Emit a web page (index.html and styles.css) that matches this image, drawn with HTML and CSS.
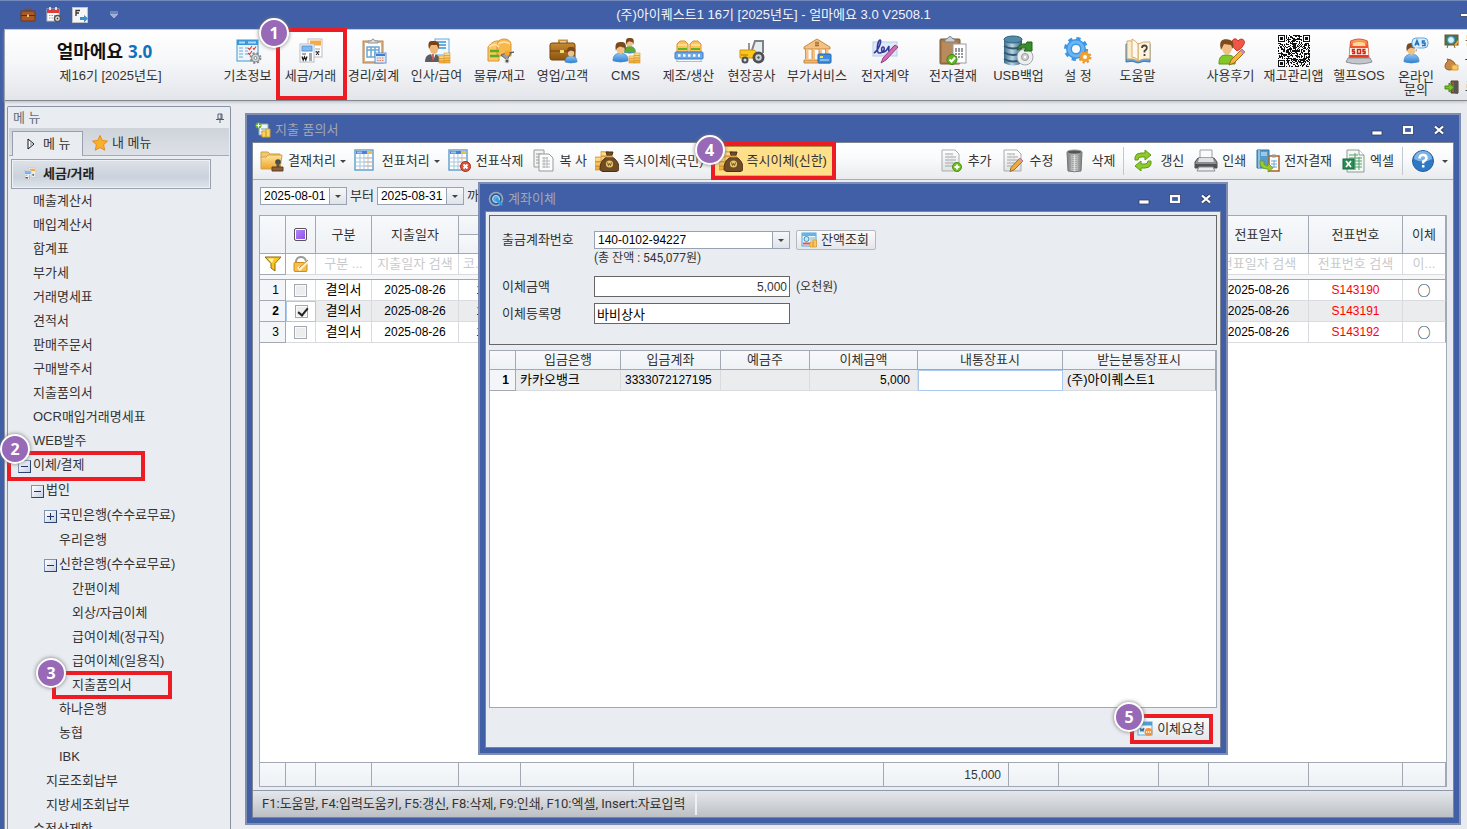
FILE: index.html
```html
<!DOCTYPE html>
<html lang="ko">
<head>
<meta charset="utf-8">
<title>얼마에요 3.0</title>
<link rel="stylesheet" href="styles.css">
</head>
<body>
<svg class="sprite" aria-hidden="true">
  <defs>
    <linearGradient id="gBlue" x1="0" y1="0" x2="0" y2="1"><stop offset="0" stop-color="#8cc6f4"/><stop offset="1" stop-color="#2f7fd0"/></linearGradient>
    <linearGradient id="gGold" x1="0" y1="0" x2="0" y2="1"><stop offset="0" stop-color="#ffe39a"/><stop offset="1" stop-color="#eda52c"/></linearGradient>
    <linearGradient id="gPage" x1="0" y1="0" x2="0" y2="1"><stop offset="0" stop-color="#ffffff"/><stop offset="1" stop-color="#dfe2e4"/></linearGradient>
    <linearGradient id="gBrown" x1="0" y1="0" x2="0" y2="1"><stop offset="0" stop-color="#c58a33"/><stop offset="1" stop-color="#8a540f"/></linearGradient>
    <linearGradient id="gGray" x1="0" y1="0" x2="1" y2="0"><stop offset="0" stop-color="#777"/><stop offset=".5" stop-color="#ddd"/><stop offset="1" stop-color="#777"/></linearGradient>
    <linearGradient id="gDb" x1="0" y1="0" x2="1" y2="0"><stop offset="0" stop-color="#3c6a88"/><stop offset=".45" stop-color="#b9d6e4"/><stop offset="1" stop-color="#2f5974"/></linearGradient>
    <linearGradient id="gRed" x1="0" y1="0" x2="0" y2="1"><stop offset="0" stop-color="#ffb25c"/><stop offset=".35" stop-color="#f4572f"/><stop offset="1" stop-color="#e2341f"/></linearGradient>
    <g id="coins"><rect x="0" y="4" width="6" height="7" fill="url(#gGold)" stroke="#d9982e" stroke-width=".6"/><rect x="5" y="1" width="6" height="10" fill="url(#gGold)" stroke="#d9982e" stroke-width=".6"/><path d="M0 6.500h5M0 9h5M5 3.500h6M5 6h6M5 8.500h6" stroke="#d9982e" stroke-width=".8"/></g>
    <g id="man"><path d="M0 15c0-4 2-6 6-6s6 2 6 6q-6 2-12 0z" fill="url(#gBlue)" stroke="#3d86cc" stroke-width=".6"/><ellipse cx="6" cy="5.500" rx="3.300" ry="4" fill="#f2c189"/><path d="M2.300 7C1 0 4 0 6.500 0s5 1 3.300 7L9 4.500 5.500 3.500 3.200 5z" fill="#7a4a1c"/></g>
    <g id="bag"><path d="M9 2h7l-1.500 4.500C20 10 22 13 22 19.500q-1 2-3 2H6q-2 0-3-2C3 13 5 10 10.500 6.500z" fill="#6f4b26" stroke="#4b2f14"/><path d="M9 6.500h7" stroke="#d8a758" stroke-width="1.600"/><circle cx="12.500" cy="14" r="3.600" fill="#e3c56b"/><path d="M10.500 12.500l1 3 1-2 1 2 1-3" fill="none" stroke="#6b4516" stroke-width=".9"/></g>
    <g id="sheet"><path d="M2 1h13l4 4v17H2z" fill="url(#gPage)" stroke="#a9abad"/><path d="M5 5h8M5 8h11M5 11h11M5 14h11M5 17h11" stroke="#a1a4a7"/><path d="M8 4v14M12 4v14" stroke="#c8cacc" stroke-width=".7"/></g>
    <g id="gridsheet"><rect x="1" y="1" width="18" height="20" fill="#fff" stroke="#5d9dca" stroke-width="1.400"/><rect x="2" y="2" width="16" height="3" fill="#4f7fd6"/><path d="M3 3.500h5" stroke="#9fc2f2" stroke-width="2"/><path d="M13 3.500h5" stroke="#f5bd3c" stroke-width="3"/><path d="M2 9h16M2 13h16M2 17h16M6 5v15M10 5v15M14 5v15" stroke="#a5c5df"/><path d="M11 9h7M11 13h7M11 17h7" stroke="#f0b58d"/></g>
  </defs>
  <symbol id="i-basic" viewBox="0 0 32 32"><rect x="5" y="5" width="21" height="21" fill="#eef6fd" stroke="#3c9ad2"/><path d="M5 5h21v5H5z" fill="#3b98d6"/><path d="M7 7.500h6M16 7.500h8" stroke="#a8dcfa" stroke-width="2"/><path d="M7 13h4M7 16h4M7 19h4M7 22h4M13 13h3M13 16h3M13 19h3" stroke="#9cc2df" stroke-width="1.500"/><path d="M16 13l1.500 1.500L20 11M21 13l1 1.500 2-3M16 18l1.500 1.500L20 16" fill="none" stroke="#d9453a" stroke-width="1.200"/><circle cx="23.500" cy="23" r="4" fill="#d5d8da" stroke="#85898c"/><circle cx="23.500" cy="23" r="5" fill="none" stroke="#85898c" stroke-width="1.800" stroke-dasharray="2 2"/><circle cx="23.500" cy="23" r="1.500" fill="#fff" stroke="#85898c"/></symbol>
  <symbol id="i-tax" viewBox="0 0 32 32"><rect x="13" y="4" width="14" height="18" fill="#fff" stroke="#b9bcc0"/><rect x="15" y="5.500" width="11" height="5" fill="#f7a94a"/><path d="M20 14h5M20 17h5" stroke="#9fa2a5"/><path d="M21 16l3 4m0-4l-3 4" stroke="#333" stroke-width="1.200"/><rect x="5" y="9" width="14" height="18" fill="#fff" stroke="#b9bcc0"/><rect x="7" y="11" width="10" height="5" fill="#7fb9ee" stroke="#5597d8"/><path d="M7 19h4M14 19h3M14 21h3M14 23h3M14 25h3" stroke="#8b8f92" stroke-width="1.300"/><path d="M7 21.500l1.200 3.500 1.300-3 1.300 3 1.200-3.500" fill="none" stroke="#222" stroke-width="1.300"/></symbol>
  <symbol id="i-acct" viewBox="0 0 32 32"><rect x="5" y="6" width="20" height="22" fill="#d9b48c" stroke="#b28755"/><rect x="7" y="8" width="16" height="18" fill="#fff"/><path d="M10 8V6h3q2-4 4 0h3v2z" fill="#dadde0" stroke="#8e9397"/><path d="M9 12h12v10H9zM9 15h12M13 12v10M17 12v10" fill="none" stroke="#6aa7d5" stroke-width="1.500"/><rect x="17" y="18" width="11" height="10" fill="#dcebfb" stroke="#6c92c6"/><path d="M18 20h9" stroke="#3b7fd0" stroke-width="2"/><path d="M19 23h7M19 25.500h7" stroke="#e07b5b" stroke-dasharray="1.500 1"/></symbol>
  <symbol id="i-hr" viewBox="0 0 32 32"><rect x="14" y="4" width="14" height="16" fill="#f2f9ff" stroke="#67a9d9"/><path d="M16 7h9M16 10h9M16 13h9" stroke="#3d94d4" stroke-width="1.600"/><path d="M4 27c0-6 3-8 8-8s7 3 7 8z" fill="#5a5d63"/><path d="M10 18l2 8 3-8z" fill="#fff"/><path d="M12 19v7" stroke="#b83a2d" stroke-width="1.500"/><ellipse cx="13" cy="13" rx="4.500" ry="6" fill="#efb878"/><path d="M8 14C6 5 10 6 13 6s7 1 4.500 8L16 10l-6 0z" fill="#7a4311"/><use href="#coins" x="18" y="17"/></symbol>
  <symbol id="i-stock" viewBox="0 0 32 32"><path d="M4 12q5-7 11-6v20H4z" fill="#fbc765" stroke="#dc9430"/><path d="M13 10q1-6 7-6 6 0 7 5v12H13z" fill="#f8b84c" stroke="#dc9430"/><path d="M5 12q6-5 10 0M14 9q6-4 12 0" fill="none" stroke="#ffe8b0" stroke-width="1.500"/><path d="M6 16h9M6 21h9" stroke="#5dab23" stroke-width="2.500"/><path d="M30 17l-3 1-4 7-6-5 5-2z" fill="#9a9da1" stroke="#5c5f63"/><circle cx="23" cy="26" r="2" fill="#555" stroke="#ccc"/><circle cx="23" cy="18" r="2.500" fill="#f5a72c"/></symbol>
  <symbol id="i-sales" viewBox="0 0 32 32"><path d="M12 9V5.500h8V9" fill="none" stroke="#c99533" stroke-width="2"/><rect x="3" y="8" width="25" height="17" rx="2" fill="url(#gBrown)" stroke="#774607"/><path d="M3 16h25" stroke="#70400a"/><rect x="13" y="15" width="4" height="3" fill="#f4d77a"/><use href="#man" transform="translate(18 12) scale(1)"/></symbol>
  <symbol id="i-cms" viewBox="0 0 32 32"><g transform="translate(14 3) scale(.95)"><use href="#man"/><path d="M0 15c0-4 2-6 6-6s6 2 6 6z" fill="#5faa2e"/></g><use href="#man" transform="translate(3 7) scale(1.250)"/><use href="#coins" x="19" y="17"/></symbol>
  <symbol id="i-prod" viewBox="0 0 32 32"><path d="M4 9l3-3h5l3 3v8H4zM17 9l3-3h5l3 3v8H17z" fill="#fbc55c" stroke="#dc9430"/><path d="M5 10h9M18 10h9" stroke="#ffe3a3" stroke-width="1.500"/><path d="M5 14h9M18 14h9" stroke="#63b02c" stroke-width="2"/><rect x="2" y="17" width="28" height="7" rx="1" fill="#6ba8e8" stroke="#3d7dc5"/><path d="M5 20.500h22" stroke="#fff" stroke-width="2.500" stroke-dasharray="2.500 2.500"/><path d="M4 24v3M28 24v3M3 26.500h26" stroke="#9cc2e8"/></symbol>
  <symbol id="i-site" viewBox="0 0 32 32"><path d="M16 15l3-9h8v12" fill="#e6edf1" stroke="#7d8286" stroke-width="2"/><path d="M13 8v7" stroke="#72767a" stroke-width="1.500"/><path d="M4 15h14l4 3 5 1v4H4z" fill="#fcc518" stroke="#cf940d"/><path d="M5 20h7" stroke="#a47607"/><circle cx="9" cy="25" r="3.500" fill="#4d4f52"/><circle cx="9" cy="25" r="1.500" fill="#ddd"/><circle cx="22.500" cy="22.500" r="6" fill="#4d4f52"/><circle cx="22.500" cy="22.500" r="3.200" fill="#cfd2d4"/><circle cx="22.500" cy="22.500" r="1.200" fill="#555"/></symbol>
  <symbol id="i-extra" viewBox="0 0 32 32"><path d="M3 12L16 4l13 8v2H3z" fill="#f3c283" stroke="#c88a3f"/><path d="M14 8h4M14 10.500h4M15 6.500v5M17 6.500v5" stroke="#9a5a18" stroke-width=".8"/><path d="M6 14v10M12.500 14v10M19.500 14v10M26 14v10" stroke="#f4c282" stroke-width="3"/><path d="M4.500 14v10M11 14v10M18 14v10M24.500 14v10" stroke="#bd7b30" stroke-width=".7"/><path d="M3 25h26v3H3z" fill="#efb76e" stroke="#c88a3f"/><rect x="17" y="19" width="13" height="9" rx="1" fill="#3c8fe0" stroke="#2367b0"/><path d="M19 25h9" stroke="#cce6ff"/><rect x="19" y="21" width="3" height="2" fill="#ffdc5a"/></symbol>
  <symbol id="i-sign" viewBox="0 0 32 32"><rect x="4" y="7" width="24" height="14" fill="#ddebf8" stroke="#b5cde4"/><path d="M5 18c5-3 8-13 6-13s-5 14 0 13 5-6 3-6-2 6 1 5 4-4 5-6c0 4-1 6 1 5s3-5 5-5" fill="none" stroke="#3a3c9c" stroke-width="1.600"/><path d="M26 10l3 2-12 13-5 3 2-5z" fill="#d46bb5" stroke="#993f82"/></symbol>
  <symbol id="i-appr" viewBox="0 0 32 32"><rect x="3" y="4" width="20" height="25" rx="1" fill="#a8794c" stroke="#7f5730"/><rect x="5" y="7" width="15" height="20" fill="#b88a5c"/><path d="M8 7V4h2q3-5 6 0h2v3z" fill="#c9ced1" stroke="#7b8084"/><rect x="16" y="9" width="13" height="19" fill="#fff" stroke="#999c9f"/><path d="M18 14h9M18 16h9M18 19h9M18 22h9" stroke="#74787b" stroke-width="1.500" stroke-dasharray="2 1"/><circle cx="15" cy="24.500" r="5" fill="#62b727" stroke="#3e8811"/><path d="M12.500 24.500l2 2 3.500-4" fill="none" stroke="#fff" stroke-width="2"/></symbol>
  <symbol id="i-usb" viewBox="0 0 32 32"><path d="M1 4v24q9 5 18 0V4z" fill="url(#gDb)"/><ellipse cx="10" cy="4.500" rx="9" ry="3.500" fill="#528ba9" stroke="#2f5f7b"/><path d="M1 11q9 5 18 0M1 17.500q9 5 18 0M1 24q9 5 18 0" fill="none" stroke="#305a73" stroke-width="2"/><circle cx="22" cy="22" r="8" fill="#eceeef" stroke="#a4a8ab"/><circle cx="22" cy="22" r="3.500" fill="#cdd2d5" stroke="#999"/><circle cx="22" cy="22" r="1.200" fill="#fff"/><path d="M14 15q2-7 9-6l1-2h5v9h-8l2-3q-5-1-9 2z" fill="#388d2c" stroke="#216517"/></symbol>
  <symbol id="i-set" viewBox="0 0 32 32"><circle cx="14" cy="14" r="7" fill="none" stroke="#3b97e6" stroke-width="6"/><circle cx="14" cy="14" r="10.500" fill="none" stroke="#3b97e6" stroke-width="3" stroke-dasharray="4.200 4.050"/><circle cx="14" cy="14" r="7" fill="none" stroke="#6bb5f2" stroke-width="3"/><circle cx="23" cy="22" r="3.500" fill="#fff" stroke="#f2a02e" stroke-width="3"/><circle cx="23" cy="22" r="5.500" fill="none" stroke="#eb962a" stroke-width="2" stroke-dasharray="2.200 2.120"/></symbol>
  <symbol id="i-help" viewBox="0 0 32 32"><path d="M4 9h24v18q-6-2-12 1-6-3-12-1z" fill="#5d9bd6" stroke="#3f78b0"/><path d="M5 6q7-1 11 3v17q-5-3-11-2z" fill="#fdecc8" stroke="#d3ab70"/><path d="M16 9q5-3 12-2v17q-7-1-12 2z" fill="#fff3da" stroke="#d3ab70"/><path d="M10 4q4 2 6 5v16q-3-3-6-3z" fill="#fffaf0" stroke="#d3ab70"/><path d="M20 13q0-2.500 2.500-2.500t2.300 2.500q0 1.500-2.300 3v1.500M22.500 19v2" fill="none" stroke="#444" stroke-width="1.800"/></symbol>
  <symbol id="i-review" viewBox="0 0 32 32"><path d="M17 9c-1-5 4-7 6-3 3-4 8-1 6 3q-2 5-7 7-4-3-5-7z" fill="#ef5645" stroke="#c9372b"/><path d="M4 29c0-7 2-9 8-9s9 3 8 9z" fill="#82c928" stroke="#5a9b13"/><ellipse cx="12" cy="13" rx="5" ry="6.500" fill="#f1bf85"/><path d="M6 15C3 4 9 4 13 4.500S20 7 17.500 14L16 10l-7-1z" fill="#7e4a1b"/><path d="M27 14l3 3-11 11-5 2 2-5z" fill="#f6b53b" stroke="#9a6a20"/><path d="M27 14l3 3-2 2-3-3z" fill="#c58bc9"/></symbol>
  <symbol id="i-sos" viewBox="0 0 32 32"><path d="M6 24L7.500 6q8.500-4 17 0L26 24z" fill="url(#gRed)" stroke="#d8563a"/><path d="M10 8q6-2 12 0l.5 3h-13z" fill="#ffd9a0"/><path d="M7 13h18l.5 7h-19z" fill="#fff6ea"/><path d="M12 14.500H9.500v2h2v2H9M14.500 14.500h3v4h-3zM22.500 14.500H20v2h2v2h-2.500" fill="none" stroke="#d42416" stroke-width="1.500"/><path d="M5 23h22l2 4q-13 4-26 0z" fill="#c3c6ca" stroke="#8b9096"/></symbol>
  <symbol id="i-as" viewBox="0 0 32 32"><use href="#man" transform="translate(4 8) scale(1.250)"/><rect x="12" y="3" width="16" height="10" rx="4" fill="#d8eefc" stroke="#62a9dc"/><path d="M15 12l-1 4 5-3z" fill="#d8eefc"/><path d="M15 10.500l2-5 2 5M16 9h3M25 6H22.500v2H25v2.500H22" fill="none" stroke="#2470bd" stroke-width="1.500"/></symbol>
  <symbol id="i-board" viewBox="0 0 16 16"><rect x="1" y="2" width="13" height="10" fill="#3a7a5c" stroke="#775425"/><circle cx="7" cy="7" r="3.500" fill="#d9effa" stroke="#4095c7"/><path d="M10 12l4-5 1 1-3 5z" fill="#f2a23a"/><path d="M4 12l-1 3M10 12l1 3" stroke="#875d2a"/></symbol>
  <symbol id="i-bag" viewBox="0 0 16 16"><path d="M3 3l4 1q4 2 5 6-1 4-6 4T1 10q0-3 3-5z" fill="#c88944" stroke="#935b21"/><path d="M8 9h6v5H8z" fill="#f9c865" stroke="#d99c34"/></symbol>
  <symbol id="i-exit" viewBox="0 0 16 16"><path d="M7 2h7v12H7z" fill="#8a6138" stroke="#593b1c"/><path d="M10 3l4-1v13l-4-1z" fill="#555"/><path d="M1 7h4V4l5 4.500-5 4.500v-3H1z" fill="#76c22b" stroke="#49890f"/></symbol>
  <symbol id="i-case" viewBox="0 0 16 16"><path d="M5.500 4V2.500h5V4" fill="none" stroke="#8a4a1b" stroke-width="1.500"/><rect x="1" y="4" width="14" height="10" rx="1" fill="#a8592a" stroke="#733612"/><path d="M1 8.500h14" stroke="#5e2b0e"/><rect x="7" y="7.500" width="2" height="2.500" fill="#f3c263"/></symbol>
  <symbol id="i-cal" viewBox="0 0 16 16"><rect x="1" y="2" width="12" height="12" fill="#fff" stroke="#bbb"/><path d="M1 2h12v4H1z" fill="#dd3d36"/><path d="M4 0v3M10 0v3" stroke="#fff" stroke-width="1.500"/><path d="M3 8.500h8M3 11h5" stroke="#999" stroke-dasharray="1.500 1"/><circle cx="11.500" cy="11.500" r="3" fill="#eee" stroke="#555" stroke-width="1.500"/><circle cx="11.500" cy="11.500" r="1" fill="#444"/></symbol>
  <symbol id="i-fkey" viewBox="0 0 16 16"><rect x=".5" y=".5" width="15" height="15" fill="#f4f5f6" stroke="#bfc3c7"/><path d="M4 9V3.500h4M4 6h3" fill="none" stroke="#333" stroke-width="1.300"/><path d="M8 10h4V8l4 3.500-4 4V13H8z" fill="#3f8dc4"/></symbol>
  <symbol id="i-folder" viewBox="0 0 24 24"><path d="M1 3h7l2 2h10v4H1z" fill="#f0c873" stroke="#cf9d45"/><path d="M1 8h5l2-2h14l-2 14H1z" fill="url(#gGold)" stroke="#d3a04a"/><circle cx="18" cy="13" r="2.800" fill="#4a4a4a"/><path d="M16.500 14h3v4h-3z" fill="#555"/><path d="M12 18h11v4H12z" fill="#8c6138" stroke="#5f3e1e"/></symbol>
  <symbol id="i-grid" viewBox="0 0 24 24"><use href="#gridsheet"/></symbol>
  <symbol id="i-griddel" viewBox="0 0 24 24"><use href="#gridsheet"/><circle cx="17.500" cy="17.500" r="5" fill="#dc5139" stroke="#a82e1c"/><path d="M15.500 15.500l4 4m0-4l-4 4" stroke="#fff" stroke-width="1.800"/></symbol>
  <symbol id="i-copy" viewBox="0 0 24 24"><path d="M2 1h10v17H2z" fill="#f3f4f5" stroke="#999"/><path d="M4 5h6M4 8h6M4 11h6M4 14h6" stroke="#999"/><path d="M7 5h10l4 4v13H7z" fill="#fcfcfc" stroke="#999"/><path d="M10 9h6M10 12h8M10 15h8M10 18h8M12 8v11M15 8v11" stroke="#b4b6b8"/></symbol>
  <symbol id="i-money" viewBox="0 0 24 24"><use href="#coins" transform="translate(0 1) scale(1.200 1.800)"/><use href="#bag" x="2" y="1"/></symbol>
  <symbol id="i-add" viewBox="0 0 24 24"><use href="#sheet"/><circle cx="17" cy="18" r="4.500" fill="#74bd26" stroke="#4b9212"/><path d="M14.500 18h5M17 15.500v5" stroke="#fff" stroke-width="1.800"/></symbol>
  <symbol id="i-edit" viewBox="0 0 24 24"><use href="#sheet"/><path d="M18 9l3 3-9 9-4 1.500 1-4z" fill="#f3a83a" stroke="#9b7030"/><path d="M18 9l3 3-1.500 1.500-3-3z" fill="#cf8fd0"/></symbol>
  <symbol id="i-trash" viewBox="0 0 24 24"><path d="M4 3h15l-1 19q-6.500 1.500-13 0z" fill="url(#gGray)" stroke="#777"/><path d="M7 6v15M10 6v16M13 6v16M16 6v15" stroke="#888" stroke-dasharray="1 1"/><ellipse cx="11.500" cy="3" rx="7.500" ry="2" fill="#555" stroke="#999"/></symbol>
  <symbol id="i-refresh" viewBox="0 0 24 24"><path d="M3 11V8q1-4 6-4h4V1l6 5-6 5V8H9q-3 0-3 3z" fill="#8fca2c" stroke="#5d9c12"/><path d="M19 12v3q-1 4-6 4H9v3l-6-5 6-5v3h4q3 0 3-3z" fill="#8fca2c" stroke="#5d9c12"/></symbol>
  <symbol id="i-print" viewBox="0 0 24 24"><path d="M6 1h12v10H6z" fill="#fbfbfb" stroke="#9c9fa2"/><path d="M4 9h16l3 4v6H1v-6z" fill="#8b8e91" stroke="#4e5154"/><path d="M5 9h14l1 4H4z" fill="#dfe1e2"/><path d="M1 15h22v4H1z" fill="#505356"/><path d="M5 18h14l2 4H3z" fill="#e9eaeb" stroke="#8b8e91"/></symbol>
  <symbol id="i-eappr" viewBox="0 0 24 24"><path d="M1 1h12v18H1z" fill="#549ccb" stroke="#2f74a5"/><path d="M3 1v18" stroke="#c9e5f7"/><path d="M5 4h6M5 6h6" stroke="#e5f4fd"/><rect x="13" y="7" width="10" height="15" fill="#fff" stroke="#ad6a34" stroke-width="1.600"/><path d="M16 5.500h4v3h-4z" fill="#999"/><path d="M15 12h6M15 15h6M15 18h6M18 11v8" stroke="#70a8d8"/><path d="M4 12h4v3q1 2 4 2v-3l5 5-5 4v-3q-7 0-8-5z" fill="#9bc82e" stroke="#67920f" stroke-width=".7"/></symbol>
  <symbol id="i-excel" viewBox="0 0 24 24"><path d="M5 1h12l5 5v17H5z" fill="#f2f8f3" stroke="#8d9a91"/><path d="M17 1v5h5" fill="#fff" stroke="#8d9a91"/><path d="M7 6h9M7 9h13M7 12h13M7 15h13M7 18h13M13 4v17M17 8v13" stroke="#4fa36b"/><rect x="1" y="10" width="11" height="10" fill="#2a8b57" stroke="#166a3d"/><path d="M4 12l5 6m0-6l-5 6" stroke="#fff" stroke-width="1.800"/></symbol>
  <symbol id="i-q" viewBox="0 0 24 24"><circle cx="12" cy="12" r="10.500" fill="#2f79c4" stroke="#235f9f"/><path d="M3 10a9 8 0 0118 0q-9 5-18 0z" fill="#7db4e6"/><path d="M8.500 9.500q0-3.500 3.500-3.500t3.500 3q0 2-3.300 3.500V14.500M12.200 16v2.500" fill="none" stroke="#fff" stroke-width="2.500"/></symbol>
  <symbol id="i-doc" viewBox="0 0 16 16"><path d="M4 2h9v11H4z" fill="#eef6f3" stroke="#8aa"/><path d="M6 7h6M6 10h4" stroke="#69a0c8"/><path d="M7 9h4v6H7zM11 7h4v8h-4z" fill="#f8d76a" stroke="#d4a22c"/><circle cx="3.500" cy="3.500" r="3" fill="#64b52a"/><path d="M3.500 1.500v4M1.500 3.500h4" stroke="#fff"/></symbol>
  <symbol id="i-mag" viewBox="0 0 16 16"><circle cx="8" cy="8" r="6.500" fill="#2b5c94" stroke="#9aa8ba" stroke-width="1.600"/><circle cx="8" cy="8" r="3.500" fill="#58a9e4" stroke="#cde"/><path d="M8 8l6 6" stroke="#2f9be0" stroke-width="2.500"/></symbol>
  <symbol id="i-bal" viewBox="0 0 16 16"><rect x="1" y="1" width="14" height="13" fill="#e6f3fb" stroke="#55a5d6"/><path d="M1 1h14v3H1z" fill="#67b3e2"/><path d="M9 6h5M9 8h5" stroke="#8bb"/><circle cx="5.500" cy="7" r="2.500" fill="#cfe8f8" stroke="#3b8dc2"/><path d="M2 11.500h7" stroke="#d55" stroke-width="2"/><path d="M9 10h3v5H9zM12 8h3.500v7H12z" fill="#fbc65a" stroke="#d79830" stroke-width=".7"/></symbol>
  <symbol id="i-req" viewBox="0 0 16 16"><rect x="1" y="1" width="14" height="13" fill="#eef7fd" stroke="#62a9d8"/><path d="M1 1h14v3.500H1z" fill="#4c9fd6"/><path d="M3 7l1 3 1-2 1 2 1-3" fill="none" stroke="#28679c" stroke-width="1.200"/><circle cx="11.500" cy="11" r="4" fill="#f6923a"/><path d="M9 11h5" stroke="#fff" stroke-width="1.500" stroke-dasharray="1.200 .7"/></symbol>
  <symbol id="i-star" viewBox="0 0 16 16"><path d="M8 .5l2.300 5 5.200.6-3.900 3.600 1.100 5.500L8 12.500l-4.700 2.700 1.100-5.500L.5 6.100l5.200-.6z" fill="#fbb02d" stroke="#e58c12"/></symbol>
  <symbol id="i-pin" viewBox="0 0 10 10"><path d="M3 1h4v5H3zM1 6.500h8M5 7v3" fill="none" stroke="#555e70"/><path d="M6 1v5" stroke="#555e70"/></symbol>
  <symbol id="i-tri" viewBox="0 0 8 12"><path d="M1 1l6 5-6 5z" fill="#fff" stroke="#111"/><path d="M3 4l3 2-3 2z" fill="#b5b5b5"/></symbol>
  <symbol id="i-funnel" viewBox="0 0 18 16"><path d="M1 1h16l-6 6.500V15l-4-3V7.500z" fill="#fcc41c" stroke="#8b6a0f"/><path d="M4 2.500h6L8 7" fill="#fff3a8"/></symbol>
  <symbol id="i-lock" viewBox="0 0 18 16"><path d="M4 7V5q1-4 5-4t5 4v2" fill="none" stroke="#9b9b9b" stroke-width="2"/><rect x="2" y="6.500" width="13" height="9" rx="1" fill="#f8bd4b" stroke="#d08d1b"/><path d="M6 11l2 2 8-8" fill="none" stroke="#fff3c8" stroke-width="3"/><path d="M7 12l9-8" stroke="#c98320"/></symbol>
  <symbol id="i-min" viewBox="0 0 12 12"><rect x="1" y="7" width="10" height="4" fill="#fff" stroke="#333f5c" stroke-width=".8"/></symbol>
  <symbol id="i-max" viewBox="0 0 12 12"><rect x="2" y="3" width="8" height="6" fill="none" stroke="#333f5c" stroke-width="3.600"/><rect x="2" y="3" width="8" height="6" fill="#415fa7" stroke="#fff" stroke-width="2.200"/></symbol>
  <symbol id="i-x" viewBox="0 0 12 12"><path d="M2 2.500l8 7m0-7l-8 7" stroke="#333f5c" stroke-width="3.800"/><path d="M2 2.500l8 7m0-7l-8 7" stroke="#fff" stroke-width="2.300"/></symbol>
</svg>

<div class="app">
  <header class="titlebar">
    <div class="quick">
      <button class="ico-btn" aria-label="업무"><svg class="s16"><use href="#i-case"/></svg></button>
      <button class="ico-btn" aria-label="일정 설정"><svg class="s16"><use href="#i-cal"/></svg></button>
      <button class="ico-btn" aria-label="기능키"><svg class="s16"><use href="#i-fkey"/></svg></button>
      <button class="ico-btn more" aria-label="더 보기"><svg class="s8" viewBox="0 0 8 8"><path d="M0 1h8M0 3h8L4 7z" fill="#9fb0d4" stroke="#9fb0d4"/></svg></button>
    </div>
    <h1 class="app-title">(주)아이퀘스트1 16기 [2025년도] - 얼마에요 3.0 V2508.1</h1>
    <div class="title-end"><span class="dash"></span></div>
  </header>

  <div class="shell">
    <nav class="ribbon">
      <div class="brand">
        <div class="logo">얼마에요 <span class="ver">3.0</span></div>
        <div class="term">제16기 [2025년도]</div>
      </div>
      <button class="rb"><svg class="s32"><use href="#i-basic"/></svg><span>기초정보</span></button>
      <button class="rb"><svg class="s32"><use href="#i-tax"/></svg><span>세금/거래</span><i class="mark mark-ribbon"><b class="badge">1</b></i></button>
      <button class="rb"><svg class="s32"><use href="#i-acct"/></svg><span>경리/회계</span></button>
      <button class="rb"><svg class="s32"><use href="#i-hr"/></svg><span>인사/급여</span></button>
      <button class="rb"><svg class="s32"><use href="#i-stock"/></svg><span>물류/재고</span></button>
      <button class="rb"><svg class="s32"><use href="#i-sales"/></svg><span>영업/고객</span></button>
      <button class="rb"><svg class="s32"><use href="#i-cms"/></svg><span>CMS</span></button>
      <button class="rb"><svg class="s32"><use href="#i-prod"/></svg><span>제조/생산</span></button>
      <button class="rb"><svg class="s32"><use href="#i-site"/></svg><span>현장공사</span></button>
      <button class="rb wide"><svg class="s32"><use href="#i-extra"/></svg><span>부가서비스</span></button>
      <button class="rb wide"><svg class="s32"><use href="#i-sign"/></svg><span>전자계약</span></button>
      <button class="rb wide"><svg class="s32"><use href="#i-appr"/></svg><span>전자결재</span></button>
      <button class="rb"><svg class="s32"><use href="#i-usb"/></svg><span>USB백업</span></button>
      <button class="rb narrow"><svg class="s32"><use href="#i-set"/></svg><span>설 정</span></button>
      <button class="rb"><svg class="s32"><use href="#i-help"/></svg><span>도움말</span></button>
      <button class="rb apart"><svg class="s32"><use href="#i-review"/></svg><span>사용후기</span></button>
      <button class="rb"><svg class="s32" id="qr" viewBox="0 0 31 31" shape-rendering="crispEdges"></svg><span>재고관리앱</span></button>
      <button class="rb wide"><svg class="s32"><use href="#i-sos"/></svg><span>헬프SOS</span></button>
      <button class="rb tight"><svg class="s32"><use href="#i-as"/></svg><span class="two">온라인<br>문의</span></button>
      <div class="side-tools">
        <button><svg class="s16"><use href="#i-board"/></svg>동영상</button>
        <button><svg class="s16"><use href="#i-bag"/></svg>T스토어</button>
        <button><svg class="s16"><use href="#i-exit"/></svg>로그아웃</button>
      </div>
    </nav>

    <div class="main">
      <aside class="sidebar">
        <div class="side-head"><span>메 뉴</span><button class="ico-btn" aria-label="고정"><svg class="s10"><use href="#i-pin"/></svg></button></div>
        <div class="tabs">
          <button class="tab on"><svg class="tri"><use href="#i-tri"/></svg>메 뉴</button>
          <button class="tab"><svg class="s16"><use href="#i-star"/></svg>내 메뉴</button>
        </div>
        <button class="section"><svg class="s16"><use href="#i-tax"/></svg>세금/거래</button>
        <ul class="tree">
          <li><a href="#">매출계산서</a></li>
          <li><a href="#">매입계산서</a></li>
          <li><a href="#">합계표</a></li>
          <li><a href="#">부가세</a></li>
          <li><a href="#">거래명세표</a></li>
          <li><a href="#">견적서</a></li>
          <li><a href="#">판매주문서</a></li>
          <li><a href="#">구매발주서</a></li>
          <li><a href="#">지출품의서</a></li>
          <li><a href="#">OCR매입거래명세표</a></li>
          <li><a href="#">WEB발주</a></li>
          <li>
            <div class="node"><button class="tog" aria-label="접기"></button><a href="#">이체/결제</a><i class="mark mark-pay"><b class="badge">2</b></i></div>
            <ul>
              <li>
                <div class="node"><button class="tog" aria-label="접기"></button><a href="#">법인</a></div>
                <ul>
                  <li><div class="node"><button class="tog plus" aria-label="펼치기"></button><a href="#">국민은행(수수료무료)</a></div></li>
                  <li><a href="#">우리은행</a></li>
                  <li>
                    <div class="node"><button class="tog" aria-label="접기"></button><a href="#">신한은행(수수료무료)</a></div>
                    <ul>
                      <li><a href="#">간편이체</a></li>
                      <li><a href="#">외상/자금이체</a></li>
                      <li><a href="#">급여이체(정규직)</a></li>
                      <li><a href="#">급여이체(일용직)</a></li>
                      <li class="rel"><a href="#">지출품의서</a><i class="mark mark-doc"><b class="badge">3</b></i></li>
                    </ul>
                  </li>
                  <li><a href="#">하나은행</a></li>
                  <li><a href="#">농협</a></li>
                  <li><a href="#">IBK</a></li>
                </ul>
              </li>
              <li><a href="#">지로조회납부</a></li>
              <li><a href="#">지방세조회납부</a></li>
            </ul>
          </li>
          <li><a href="#">수정삭제함</a></li>
        </ul>
      </aside>

      <main class="workspace">
        <section class="win">
          <header class="win-title"><svg class="s16"><use href="#i-doc"/></svg><h2>지출 품의서</h2>
            <button class="wc" aria-label="최소화"><svg class="s12"><use href="#i-min"/></svg></button><button class="wc" aria-label="최대화"><svg class="s12"><use href="#i-max"/></svg></button><button class="wc" aria-label="닫기"><svg class="s12"><use href="#i-x"/></svg></button>
          </header>
          <div class="win-body">
            <div class="toolbar">
              <div class="tools">
                <button class="tb"><svg class="s24"><use href="#i-folder"/></svg>결재처리<i class="caret"></i></button>
                <button class="tb"><svg class="s24"><use href="#i-grid"/></svg>전표처리<i class="caret"></i></button>
                <button class="tb"><svg class="s24"><use href="#i-griddel"/></svg>전표삭제</button>
                <button class="tb"><svg class="s24"><use href="#i-copy"/></svg>복 사</button>
                <button class="tb"><svg class="s24"><use href="#i-money"/></svg>즉시이체(국민)</button>
                <button class="tb hot"><svg class="s24"><use href="#i-money"/></svg>즉시이체(신한)<i class="mark mark-tool"><b class="badge">4</b></i></button>
              </div>
              <div class="tools end">
                <button class="tb"><svg class="s24"><use href="#i-add"/></svg>추가</button>
                <button class="tb"><svg class="s24"><use href="#i-edit"/></svg>수정</button>
                <button class="tb"><svg class="s24"><use href="#i-trash"/></svg>삭제</button>
                <span class="sep"></span>
                <button class="tb"><svg class="s24"><use href="#i-refresh"/></svg>갱신</button>
                <button class="tb"><svg class="s24"><use href="#i-print"/></svg>인쇄</button>
                <button class="tb"><svg class="s24"><use href="#i-eappr"/></svg>전자결재</button>
                <button class="tb"><svg class="s24"><use href="#i-excel"/></svg>엑셀</button>
                <span class="sep"></span>
                <button class="tb help" aria-label="도움말"><svg class="s24"><use href="#i-q"/></svg><i class="caret"></i></button>
              </div>
            </div>
            <div class="range">
              <span class="combo date"><input id="from" type="text" value="2025-08-01"><button aria-label="달력"><i class="caret"></i></button></span>
              <label for="from">부터</label>
              <span class="combo date"><input id="to" type="text" value="2025-08-31"><button aria-label="달력"><i class="caret"></i></button></span>
              <label for="to">까지</label>
            </div>
            <div class="grid">
              <table class="list">
                <colgroup><col class="w26"><col class="w30"><col class="w56"><col class="w87"><col class="w62"><col class="w113"><col><col class="w125"><col class="w50"><col class="w100"><col class="w50"><col class="w100"><col class="w94"><col class="w43"></colgroup>
                <thead>
                  <tr><th rowspan="2"></th><th rowspan="2"><i class="allbox"></i></th><th rowspan="2">구분</th><th rowspan="2">지출일자</th><th colspan="2"></th><th rowspan="2"></th><th rowspan="2"></th><th rowspan="2"></th><th rowspan="2"></th><th rowspan="2"></th><th rowspan="2">전표일자</th><th rowspan="2">전표번호</th><th rowspan="2">이체</th></tr>
                  <tr><th></th><th></th></tr>
                </thead>
                <tbody>
                  <tr class="filter"><td class="no"><svg class="s18"><use href="#i-funnel"/></svg></td><td><svg class="s18"><use href="#i-lock"/></svg></td><td><input aria-label="구분 검색" placeholder="구분 ..."></td><td><input aria-label="지출일자 검색" placeholder="지출일자 검색"></td><td class="left"><input aria-label="코드 검색" placeholder="코..."></td><td></td><td></td><td></td><td></td><td></td><td></td><td><input aria-label="전표일자 검색" placeholder="전표일자 검색"></td><td><input aria-label="전표번호 검색" placeholder="전표번호 검색"></td><td><input aria-label="이체 검색" placeholder="이..."></td></tr>
                  <tr class="gap"><td colspan="14"></td></tr>
                  <tr><td class="no">1</td><td><input type="checkbox" aria-label="1행 선택"></td><td>결의서</td><td class="n">2025-08-26</td><td class="n">1000</td><td></td><td></td><td></td><td></td><td></td><td></td><td class="n">2025-08-26</td><td class="n red">S143190</td><td class="ring">○</td></tr>
                  <tr class="sel"><td class="no">2</td><td class="focus"><input type="checkbox" aria-label="2행 선택" checked></td><td>결의서</td><td class="n">2025-08-26</td><td class="n">1000</td><td></td><td></td><td></td><td></td><td></td><td></td><td class="n">2025-08-26</td><td class="n red">S143191</td><td></td></tr>
                  <tr><td class="no">3</td><td><input type="checkbox" aria-label="3행 선택"></td><td>결의서</td><td class="n">2025-08-26</td><td class="n">1000</td><td></td><td></td><td></td><td></td><td></td><td></td><td class="n">2025-08-26</td><td class="n red">S143192</td><td class="ring">○</td></tr>
                </tbody>
              </table>
              <div class="blank"></div>
              <table class="list sum">
                <colgroup><col class="w26"><col class="w30"><col class="w56"><col class="w87"><col class="w62"><col class="w113"><col><col class="w125"><col class="w50"><col class="w100"><col class="w50"><col class="w100"><col class="w94"><col class="w43"></colgroup>
                <tbody><tr><td></td><td></td><td></td><td></td><td></td><td></td><td></td><td class="n num">15,000</td><td></td><td></td><td></td><td></td><td></td><td></td></tr></tbody>
              </table>
            </div>
            <footer class="status"><span>F1:도움말, F4:입력도움키, F5:갱신, F8:삭제, F9:인쇄, F10:엑셀, Insert:자료입력</span></footer>
          </div>
        </section>

        <section class="win dialog">
          <header class="win-title"><svg class="s16"><use href="#i-mag"/></svg><h2>계좌이체</h2>
            <button class="wc" aria-label="최소화"><svg class="s12"><use href="#i-min"/></svg></button><button class="wc" aria-label="최대화"><svg class="s12"><use href="#i-max"/></svg></button><button class="wc" aria-label="닫기"><svg class="s12"><use href="#i-x"/></svg></button>
          </header>
          <div class="win-body dlg-body">
            <form class="panel">
              <label for="acct">출금계좌번호</label>
              <span class="combo"><input id="acct" type="text" value="140-0102-94227"><button type="button" aria-label="계좌 선택"><i class="caret"></i></button></span>
              <button type="button" class="btn"><svg class="s16"><use href="#i-bal"/></svg>잔액조회</button>
              <span class="hint balance">(총 잔액 : 545,077원)</span>
              <label for="amt">이체금액</label>
              <input id="amt" class="box right" type="text" value="5,000">
              <span class="hint">(오천원)</span>
              <label for="nm">이체등록명</label>
              <input id="nm" class="box name" type="text" value="바비상사">
            </form>
            <div class="grid dlg-grid">
              <table class="list pay">
                <colgroup><col class="w26"><col class="w105"><col class="w100"><col class="w89"><col class="w108"><col class="w145"><col></colgroup>
                <thead><tr><th></th><th>입금은행</th><th>입금계좌</th><th>예금주</th><th>이체금액</th><th>내통장표시</th><th>받는분통장표시</th></tr></thead>
                <tbody><tr class="sel"><td class="no">1</td><td class="left">카카오뱅크</td><td class="left n">3333072127195</td><td></td><td class="n num">5,000</td><td class="focus"></td><td class="left">(주)아이퀘스트1</td></tr></tbody>
              </table>
            </div>
            <div class="dlg-foot"><button class="btn send"><svg class="s16"><use href="#i-req"/></svg>이체요청<i class="mark mark-send"><b class="badge">5</b></i></button></div>
          </div>
        </section>
      </main>
    </div>
  </div>
</div>
<script src="qr.js"></script>
</body>
</html>
```
FILE: styles.css
```css
* { box-sizing: border-box; }
body { margin: 0; height: 100vh; overflow: hidden; background: #415fa7; color: #333; font: 13px/16px "Liberation Sans", "Noto Sans CJK KR", sans-serif; }
button { margin: 0; padding: 0; border: 0; background: none; font: inherit; color: inherit; white-space: nowrap; }
input { font: inherit; color: #000; min-width: 0; outline: 0; }
a { color: inherit; text-decoration: none; }
h1, h2 { margin: 0; font: inherit; }
ul { margin: 0; padding: 0; list-style: none; }
svg { display: block; flex: none; }
i { font-style: normal; }
.sprite { position: absolute; width: 0; height: 0; }
.s8 { width: 8px; height: 8px; }
.s10 { width: 10px; height: 10px; }
.s12 { width: 12px; height: 12px; }
.s16 { width: 16px; height: 16px; }
.s18 { width: 18px; height: 16px; margin: 0 auto; }
.s24 { width: 24px; height: 24px; }
.s32 { width: 32px; height: 32px; }

.app { height: 100vh; display: flex; flex-direction: column; border-top: 1px solid #7389bd; }
.titlebar { flex: none; height: 28px; display: flex; align-items: center; color: #f2f4f9; }
.quick { width: 120px; padding-left: 20px; display: flex; align-items: center; gap: 10px; }
.quick .more { margin-left: 12px; }
.app-title { flex: 1; text-align: center; white-space: nowrap; }
.title-end { width: 40px; display: flex; justify-content: flex-end; }
.dash { width: 7px; height: 4px; background: #fff; border: 1px solid #4a5674; border-right: 0; }

.shell { flex: 1; min-height: 0; margin-left: 4px; display: flex; flex-direction: column; background: #e9ebf0; border-left: 1px solid #8b93a5; border-top: 1px solid #c2c9d8; }
.ribbon { flex: none; height: 71px; display: flex; background: linear-gradient(#fff, #f6f7f9 45%, #e2e5ea); border-bottom: 1px solid #85888d; box-shadow: 0 1px 3px #b5b9c2; position: relative; z-index: 2; }
.brand { flex: none; width: 211px; padding-top: 10px; text-align: center; }
.logo { padding-right: 12px; font-size: 18px; line-height: 24px; font-weight: 700; color: #111; }
.ver { font-family: "Open Sans", sans-serif; font-size: 17px; color: #0f72bd; }
.term { margin-top: 4px; }
.rb { flex: none; width: 63px; padding-top: 5px; display: flex; flex-direction: column; align-items: center; justify-content: flex-start; gap: 3px; line-height: 12px; position: relative; }
.rb.wide { width: 68px; }
.rb.narrow { width: 56px; }
.rb.tight { width: 46px; }
.rb.apart { margin-left: 30px; }
.two { line-height: 13px; }
.side-tools { flex: none; margin-left: 5px; padding-top: 3px; display: flex; flex-direction: column; gap: 7px; }
.side-tools button { display: flex; gap: 5px; }

.mark { position: absolute; border: 4px solid #ed1c24; z-index: 5; pointer-events: none; }
.badge { position: absolute; width: 30px; height: 30px; border: 2px solid #fff; border-radius: 50%; background: #9869b6; box-shadow: 0 0 4px #777; color: #fff; font: 700 16px/26px "Open Sans", sans-serif; text-align: center; }
.mark-ribbon { inset: -2px -5px 0 -3px; }
.mark-ribbon .badge { left: -21px; top: -14px; }

.main { flex: 1; min-height: 0; display: flex; }
.sidebar { flex: none; width: 224px; margin: 5px 0 0 2px; border: 1px solid #8793a5; border-bottom: 0; border-radius: 2px 2px 0 0; background: #e9ecf1; }
.side-head { height: 21px; padding: 0 5px; display: flex; justify-content: space-between; align-items: center; color: #636b7b; }
.tabs { height: 28px; margin: 0 1px; padding: 3px 0 0 3px; display: flex; background: linear-gradient(#ced3da, #dde1e7); border-bottom: 1px solid #a3abb7; }
.tab { display: flex; align-items: center; gap: 4px; padding: 0 9px; }
.tab.on { height: 25px; width: 71px; gap: 8px; padding: 0 0 0 14px; background: #e9ecf1; border: 1px solid #98a0b0; border-bottom: 0; }
.tri { width: 8px; height: 12px; }
.section { width: 200px; height: 30px; margin: 3px 0 0 3px; padding: 0 10px; display: flex; align-items: center; gap: 5px; font-weight: 700; color: #222; border: 1px solid #99a1ae; box-shadow: inset 0 0 0 1px #eef1f5; background: linear-gradient(#dde2e8, #cbd2dc 60%, #dfe4ea); }
.tree { padding-left: 25px; line-height: 24px; }
.tree a { display: block; height: 24px; white-space: nowrap; }
.tree ul { padding-left: 13px; }
.node { position: relative; height: 25px; }
.rel { position: relative; }
.tog { position: absolute; left: -15px; top: 7px; width: 13px; height: 13px; border: 1px solid #7f93b5; border-right-color: #27456f; border-bottom-color: #27456f; background: linear-gradient(#1d3760, #1d3760) center / 7px 1px no-repeat, linear-gradient(135deg, #fff, #c9cfe4); }
.tog.plus { background: linear-gradient(#1d3760, #1d3760) center / 7px 1px no-repeat, linear-gradient(#1d3760, #1d3760) center / 1px 7px no-repeat, linear-gradient(135deg, #fff, #c9cfe4); }
.mark-pay { left: -26px; top: -2px; width: 138px; height: 30px; }
.mark-pay .badge { left: -11px; top: -21px; }
.mark-doc { left: -20px; top: -2px; width: 120px; height: 28px; }
.mark-doc .badge { left: -20px; top: -17px; }

.workspace { flex: 1; min-width: 0; position: relative; padding: 12px 6px 4px 14px; display: flex; }
.win { flex: 1; min-width: 0; display: flex; flex-direction: column; padding: 0 5px 5px; border: 2px solid #7f8db0; background: #415fa7; }
.win-title { flex: none; height: 27px; display: flex; align-items: center; padding-left: 3px; padding-top: 2px; color: #a3a7ae; }
.win-title h2 { flex: 1; margin-left: 4px; }
.wc { width: 31px; height: 24px; display: flex; align-items: center; justify-content: center; }
.win-body { flex: 1; min-height: 0; display: flex; flex-direction: column; background: #e9ecf1; border: 1px solid #7f858f; }
.toolbar { flex: none; height: 37px; padding: 0 5px 0 7px; display: flex; align-items: center; justify-content: space-between; border-bottom: 1px solid #a9afb8; background: linear-gradient(#fff, #fafbfc 40%, #e9ebee); }
.tools { display: flex; align-items: center; gap: 8px; }
.tools.end { gap: 10px; }
.tb { flex: none; height: 30px; display: flex; align-items: center; gap: 4px; position: relative; }
.help { gap: 7px; }
.caret { flex: none; width: 0; height: 0; border: 3px solid transparent; border-top: 3px solid #444; border-bottom: 0; }
.hot { margin-left: 7px; z-index: 1; isolation: isolate; }
.hot::before { content: ""; position: absolute; inset: 0 -6px; background: #ffe08a; border: 1px solid #d9b35a; border-top-color: #b79142; z-index: -1; }
.mark-tool { inset: -4px -9px -4px -8px; }
.mark-tool .badge { left: -20px; top: -11px; }
.sep { width: 1px; height: 28px; margin: 0 -2px; background: #c3c8cf; }
.range { flex: none; height: 35px; padding: 7px; display: flex; gap: 3px; align-items: flex-start; line-height: 17px; }
.combo { display: flex; height: 18px; border: 1px solid #98a2b2; background: #fff; }
.combo input { flex: 1; width: 0; height: 16px; padding: 0 3px; border: 0; font-size: 12px; background: none; }
.combo button { flex: none; width: 17px; display: flex; align-items: center; justify-content: center; border-left: 1px solid #98a2b2; background: linear-gradient(#f6f7f9, #dfe3e8); }
.date { width: 87px; }

.grid { flex: 1; min-height: 0; margin: 0 6px; display: flex; flex-direction: column; background: #fff; border: 1px solid #a3a9b4; }
.blank { flex: 1; }
.list { flex: none; width: 100%; table-layout: fixed; border-collapse: separate; border-spacing: 0; }
.list th, .list td { padding: 0; height: 21px; line-height: 16px; text-align: center; font-weight: 400; white-space: nowrap; overflow: hidden; }
.list th { height: 19px; background: linear-gradient(#f7f9fb, #eef1f5); border-right: 1px solid #a3a9b4; border-bottom: 1px solid #a3a9b4; }
.list td { color: #000; border-right: 1px solid #d9dbdf; border-bottom: 1px solid #d9dbdf; }
.list td.no { padding-right: 6px; text-align: right; background: #f3f5f8; border-color: #a3a9b4; font-size: 12px; }
.list .filter .no { padding: 0; background: #fff; }
.list .gap td { height: 5px; background: #f5f7f9; border-bottom-color: #a3a9b4; }
.list td:last-child, .list th:last-child { border-right-color: #a3a9b4; }
.filter input { display: block; width: 100%; border: 0; padding: 0; text-align: center; background: none; }
.filter .left input { text-align: left; }
.filter input::placeholder { color: #c9cacc; opacity: 1; }
.list .n { font-size: 12px; }
.list .ring { font-family: "Noto Sans CJK KR", sans-serif; }
.list .num { text-align: right; padding-right: 7px; }
.list .red { color: #f00; }
.list .left { text-align: left; padding-left: 4px; }
.sel td { background: #ebecee; }
.list .sel .no { font-weight: 700; }
.list .sel .focus { background: #fff; border: 1px solid #a9c9ee; }
.list.sum td { height: 23px; background: linear-gradient(#f7f9fb, #eef1f5); border-right-color: #a3a9b4; border-bottom: 0; color: #333; }
.sum { border-top: 1px solid #a3a9b4; }
.allbox { display: block; width: 13px; height: 13px; margin: 0 auto; border: 1px solid #555; box-shadow: inset 0 0 0 1px #fff; background: linear-gradient(135deg, #b98afc, #8d4be8); border-radius: 2px; }
input[type="checkbox"] { appearance: none; display: block; width: 13px; height: 13px; margin: 0 auto; border: 1px solid #a4a8b0; background: #ededee; box-shadow: inset 0 0 0 1px #fafafa; }
input[type="checkbox"]:checked::before { content: ""; display: block; width: 4px; height: 8px; margin: 0 0 0 4px; border: solid #222; border-width: 0 2px 2px 0; transform: rotate(40deg); }
.w26 { width: 26px; } .w30 { width: 30px; } .w43 { width: 43px; } .w50 { width: 50px; } .w56 { width: 56px; } .w62 { width: 62px; }
.w87 { width: 87px; } .w89 { width: 89px; } .w94 { width: 94px; } .w100 { width: 100px; } .w105 { width: 105px; }
.w108 { width: 108px; } .w113 { width: 113px; } .w125 { width: 125px; } .w145 { width: 145px; }
.status { flex: none; height: 27px; margin-top: 3px; padding: 2px 0 2px 9px; display: flex; border-top: 1px solid #8f98a6; background: linear-gradient(#e4e7eb, #bcbfc4); line-height: 22px; font-family: Roboto, "Noto Sans CJK KR", sans-serif; }
.status span { padding-right: 9px; border-right: 2px solid #eef0f2; }

.dialog { position: absolute; left: 247px; top: 81px; width: 750px; height: 573px; }
.dlg-body { padding: 3px; }
.panel { flex: none; height: 130px; padding: 14px 12px 0; border: 1px solid #666; display: grid; grid-template-columns: 86px 196px 1fr; grid-template-rows: 20px 23px 27px 27px; column-gap: 6px; align-content: start; align-items: center; }
.panel .box { height: 21px; margin: 0; padding: 0 2px; border: 1px solid #666; background: #fff; }
.panel .right { text-align: right; font-size: 12px; color: #333; }
.panel .btn { justify-self: start; }
.hint { font-size: 12px; font-family: Roboto, "Noto Sans CJK KR", sans-serif; white-space: nowrap; }
.balance { grid-column: 2 / 4; align-self: start; }
.btn { display: flex; align-items: center; gap: 4px; height: 20px; padding: 0 6px 0 4px; border: 1px solid #b4b9c2; border-radius: 2px; background: linear-gradient(#fbfbfc, #e3e6ea); position: relative; }
.dlg-grid { margin: 5px 0 0; }
.dlg-foot { flex: none; height: 36px; padding: 9px 7px 0; display: flex; justify-content: flex-end; align-items: flex-start; }
.send { height: 24px; border-color: #e3e6ea; padding: 0 4px; }
.mark-send { inset: -4px -4px -4px -3px; }
.mark-send .badge { left: -20px; top: -16px; }
```
FILE: qr.js
```js
// Draws the inventory-app QR emblem: three finder squares and a field of modules.
const qr = document.getElementById('qr');
const corners = [[0, 0], [24, 0], [0, 24]];
let d = '';
let seed = 77;
for (let y = 0; y < 31; y++) {
  for (let x = 0; x < 31; x++) {
    const c = corners.find(([cx, cy]) => x >= cx - 1 && x <= cx + 7 && y >= cy - 1 && y <= cy + 7);
    seed = (seed * 1103515245 + 12345) % 2147483648;
    let on = seed / 2147483648 < 0.5;
    if (c) {
      const r = Math.max(Math.abs(x - c[0] - 3), Math.abs(y - c[1] - 3));
      on = r === 3 || r <= 1;
    }
    if (on) d += `M${x} ${y}h1v1h-1z`;
  }
}
qr.innerHTML = `<path d="${d}" fill="#111"/>`;
```
